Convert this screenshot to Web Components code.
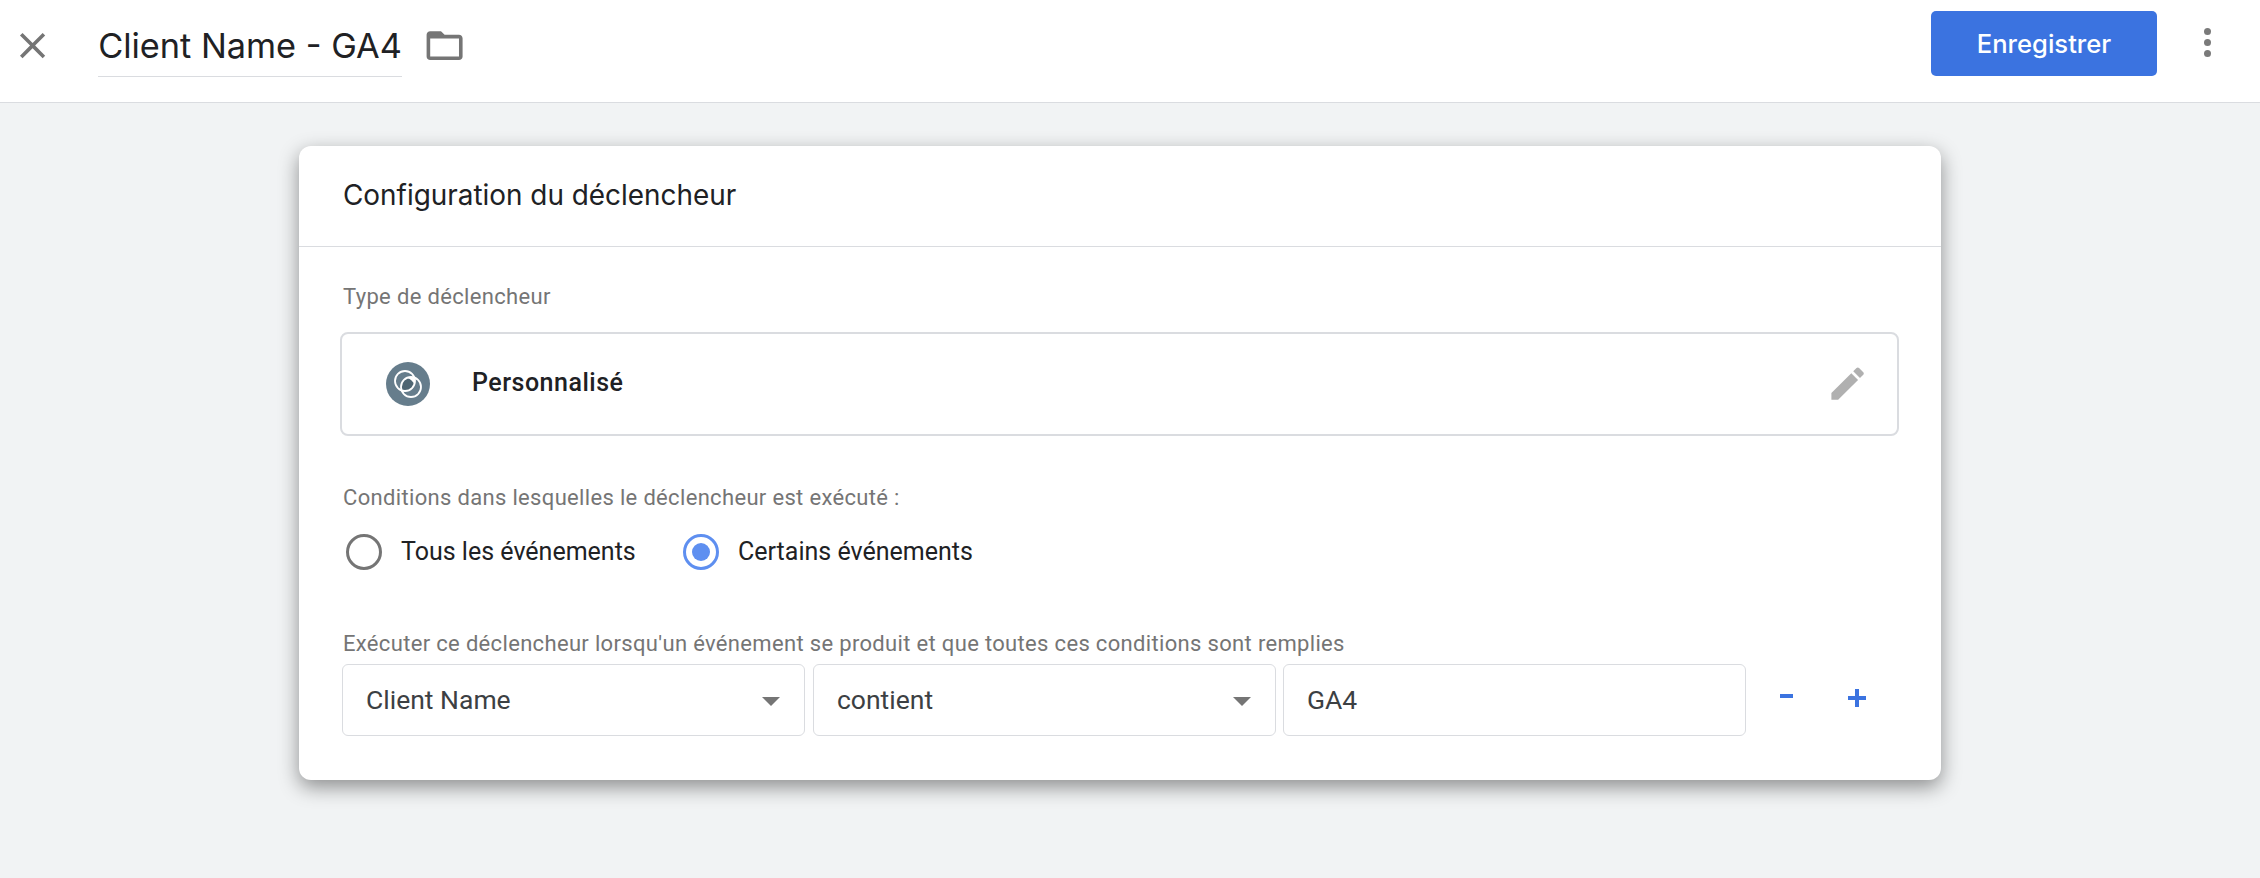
<!DOCTYPE html>
<html lang="fr">
    <head>
        <meta charset="UTF-8" />
        <title>Client Name - GA4</title>
        <style>
            html, body { margin: 0; height: 100%; background: #f1f3f4; }
            body { font-family: Roboto, "Liberation Sans", sans-serif; }
        </style>
    </head>
    <body>
        <trigger-page>
            <top-bar slot="top" title-text="Client Name - GA4" action="Enregistrer"></top-bar>
            <trigger-card heading="Configuration du déclencheur">
                <field-label style="margin-top:37px">Type de déclencheur</field-label>
                <type-picker style="margin-top:22px">Personnalisé</type-picker>
                <field-label style="margin-top:49px">Conditions dans lesquelles le déclencheur est exécuté :</field-label>
                <div style="display:flex;margin-top:17px;height:48px;align-items:center">
                    <radio-option style="margin-left:3px;width:337px">Tous les événements</radio-option>
                    <radio-option checked>Certains événements</radio-option>
                </div>
                <field-label style="margin-top:55px">Exécuter ce déclencheur lorsqu'un événement se produit et que toutes ces conditions sont remplies</field-label>
                <div style="display:flex;gap:8px;margin-top:7px;margin-left:-1px;align-items:center">
                    <field-box select style="width:463px">Client Name</field-box>
                    <field-box select style="width:463px">contient</field-box>
                    <field-box style="width:463px;margin-left:-1px">GA4</field-box>
                    <row-buttons></row-buttons>
                </div>
            </trigger-card>
        </trigger-page>

        <script>
            const ICONS = {
                close: 'M19 6.41L17.59 5 12 10.59 6.41 5 5 6.41 10.59 12 5 17.59 6.41 19 12 13.41 17.59 19 19 17.59 13.41 12z',
                folder: 'M20 6h-8l-2-2H4c-1.1 0-2 .9-2 2v12c0 1.1.9 2 2 2h16c1.1 0 2-.9 2-2V8c0-1.1-.9-2-2-2zm0 12H4V8h16v10z',
                pencil: 'M3 17.25V21h3.75L17.81 9.94l-3.75-3.75L3 17.25zM20.71 7.04c.39-.39.39-1.02 0-1.41l-2.34-2.34c-.39-.39-1.02-.39-1.41 0l-1.83 1.83 3.75 3.75 1.83-1.83z',
            };

            // every component is just a template string in an open shadow root
            class Base extends HTMLElement {
                constructor() {
                    super();
                    this.attachShadow({ mode: 'open' });
                }
                connectedCallback() {
                    this.shadowRoot.innerHTML = this.template();
                }
                icon(name, color) {
                    return `<svg width="43.2" height="43.2" viewBox="0 0 24 24" fill="${color}"><path d="${ICONS[name]}"/></svg>`;
                }
            }

            class TriggerPage extends Base {
                template() {
                    return `<style>
                        :host { display: flex; flex-direction: column; height: 878px; background: #f1f3f4; overflow: hidden; }
                        main { padding: 43px 0 0 299px; }
                    </style>
                    <slot name="top"></slot>
                    <main><slot></slot></main>`;
                }
            }

            class TopBar extends Base {
                template() {
                    return `<style>
                        :host { display: flex; align-items: flex-start; height: 102px; box-sizing: content-box;
                            background: #fff; border-bottom: 1px solid #dadce0; }
                        svg { display: block; flex: none; }
                        .close { margin: 24px 0 0 11px; }
                        .name { margin: 0 0 0 44px; height: 77px; box-sizing: border-box; width: 304px;
                            border-bottom: 1px solid #dadce0; font: 400 34.3px/92px Inter, sans-serif; color: #202124; white-space: nowrap; }
                        .folder { margin: 24px 0 0 21px; }
                        .save { margin: 11px 0 0 auto; width: 226px; height: 65px; border-radius: 5px; background: #3b73e0;
                            color: #fff; font: 500 25.6px/65px Inter, sans-serif; text-align: center; }
                        .more { margin: 28px 49px 0 47px; display: flex; flex-direction: column; gap: 4px; }
                        .more i { display: block; width: 7px; height: 7px; border-radius: 50%; background: #7a7a7a; }
                    </style>
                    <span class="close">${this.icon('close', '#757575')}</span>
                    <div class="name">${this.getAttribute('title-text')}</div>
                    <span class="folder">${this.icon('folder', '#757575')}</span>
                    <div class="save">${this.getAttribute('action')}</div>
                    <div class="more"><i></i><i></i><i></i></div>`;
                }
            }

            class TriggerCard extends Base {
                template() {
                    return `<style>
                        :host { display: block; width: 1642px; height: 634px; background: #fff; border-radius: 12px;
                            box-shadow: 0 7px 20px rgba(0,0,0,.42); }
                        header { height: 100px; box-sizing: content-box; border-bottom: 1px solid #dadce0; padding-left: 44px;
                            font: 400 27.9px/98px Inter, sans-serif; color: #202124; }
                        .body { padding: 0 0 0 44px; }
                    </style>
                    <header>${this.getAttribute('heading')}</header>
                    <div class="body"><slot></slot></div>`;
                }
            }

            class FieldLabel extends Base {
                template() {
                    return `<style>
                        :host { display: block; font: 400 22px/26px Roboto, sans-serif; letter-spacing: .33px; color: #757575; }
                    </style><slot></slot>`;
                }
            }

            class TypePicker extends Base {
                template() {
                    return `<style>
                        :host { display: flex; align-items: center; box-sizing: border-box; width: 1559px; height: 104px; margin-left: -3px;
                            border: 2px solid #dadce0; border-radius: 8px; }
                        .badge { margin-left: 44px; flex: none; display: block; }
                        .name { margin: -3px 0 0 42px; font: 500 25px/30px Roboto, sans-serif; letter-spacing: .5px; color: #202124; flex: 1; }
                        .edit { margin-right: 28px; display: block; }
                        .edit svg { display: block; }
                    </style>
                    <svg class="badge" width="44" height="44" viewBox="0 0 44 44">
                        <defs><clipPath id="lens"><path d="M28.4 15.6A10 10 0 0 1 15.6 28.4 10 10 0 0 1 28.4 15.6z"/></clipPath></defs>
                        <circle cx="22" cy="22" r="22" fill="#667d8c"/>
                        <path d="M28.4 15.6A10 10 0 0 1 15.6 28.4 10 10 0 0 1 28.4 15.6z" fill="#fff"/>
                        <circle cx="17" cy="27" r="12" fill="#4f6673" clip-path="url(#lens)"/>
                        <circle cx="19" cy="19" r="10" fill="none" stroke="#fff" stroke-width="1.8"/>
                        <circle cx="25" cy="25" r="10" fill="none" stroke="#fff" stroke-width="1.8"/>
                    </svg>
                    <div class="name"><slot></slot></div>
                    <span class="edit">${this.icon('pencil', '#b0b0b0')}</span>`;
                }
            }

            class RadioOption extends Base {
                template() {
                    const on = this.hasAttribute('checked');
                    return `<style>
                        :host { display: flex; align-items: center; gap: 19px; font: 400 25px/30px Roboto, sans-serif; color: #202124; }
                        .dot { box-sizing: border-box; width: 36px; height: 36px; border-radius: 50%; flex: none;
                            border: 3px solid ${on ? '#5e8ff0' : '#757575'}; display: flex; align-items: center; justify-content: center; }
                        .dot i { width: 18px; height: 18px; border-radius: 50%; background: #5e8ff0; }
                    </style>
                    <div class="dot">${on ? '<i></i>' : ''}</div><div><slot></slot></div>`;
                }
            }

            class FieldBox extends Base {
                template() {
                    const arrow = this.hasAttribute('select') ? '<i class="arrow"></i>' : '';
                    return `<style>
                        :host { display: flex; align-items: center; justify-content: space-between; box-sizing: border-box; height: 72px;
                            padding: 0 24px 0 23px; border: 1px solid #dadce0; border-radius: 6px;
                            font: 400 26.5px/30px Roboto, sans-serif; color: #3c4043; }
                        .arrow { width: 0; height: 0; border: 9px solid transparent; border-top-color: #757575; border-bottom: 0; margin-top: 2px; }
                    </style>
                    <div><slot></slot></div>${arrow}`;
                }
            }

            class RowButtons extends Base {
                template() {
                    return `<style>
                        :host { display: flex; align-items: center; margin-left: 26px; color: #3b73e0; margin-top: -5px; }
                        .minus { width: 13px; height: 4px; background: currentColor; margin-top: -3px; }
                        .plus { margin-left: 55px; width: 18px; height: 18px;
                            background: linear-gradient(currentColor, currentColor) center/18px 4px no-repeat,
                                        linear-gradient(currentColor, currentColor) center/4px 18px no-repeat; }
                    </style>
                    <div class="minus"></div><div class="plus"></div>`;
                }
            }

            customElements.define('trigger-page', TriggerPage);
            customElements.define('top-bar', TopBar);
            customElements.define('trigger-card', TriggerCard);
            customElements.define('field-label', FieldLabel);
            customElements.define('type-picker', TypePicker);
            customElements.define('radio-option', RadioOption);
            customElements.define('field-box', FieldBox);
            customElements.define('row-buttons', RowButtons);
        </script>
    </body>
</html>
